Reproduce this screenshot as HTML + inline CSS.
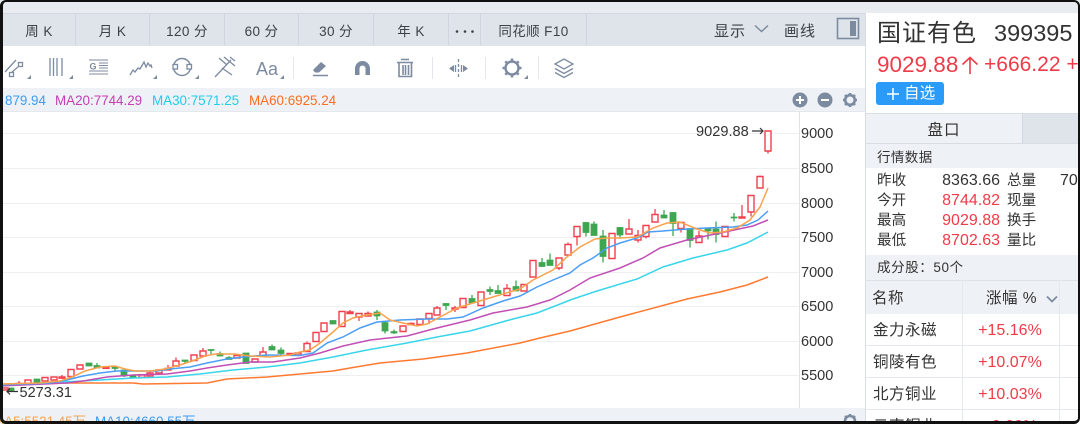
<!DOCTYPE html>
<html><head><meta charset="utf-8"><style>
html,body{margin:0;padding:0;background:#fff}
#p{position:relative;width:1080px;height:424px;overflow:hidden;background:#fff;font-family:"Liberation Sans","Noto Sans CJK SC",sans-serif;color:#333;filter:blur(.3px)}
.a{position:absolute;white-space:nowrap}
.b{position:absolute}
.tab{position:absolute;top:23px;height:18px;line-height:18px;font-size:13.5px;text-align:center;color:#3c4148;white-space:nowrap;letter-spacing:.4px}
.v{position:absolute;top:14px;width:1px;height:31px;background:#cfd6dd}
.ma{position:absolute;top:93px;line-height:16px;font-size:13.4px;white-space:nowrap}
.ax{position:absolute;left:801px;font-size:14.5px;line-height:16px;color:#333}
.l{position:absolute;left:877px;font-size:14.5px;line-height:18px;letter-spacing:.1px;color:#333;white-space:nowrap}
.l2{position:absolute;left:1007px;font-size:14.5px;line-height:18px;letter-spacing:.1px;color:#333;white-space:nowrap}
.n{position:absolute;left:880px;width:120px;text-align:right;font-size:16px;line-height:18px;color:#333}
.r{color:#ee3b48}
.nm{position:absolute;left:873px;font-size:15.5px;line-height:20px;letter-spacing:.5px;color:#333;white-space:nowrap}
.pc{position:absolute;left:962px;width:96px;text-align:center;font-size:16px;line-height:20px;color:#ee3b48}
</style></head><body><div id="p">

<div class="b" style="left:0;top:0;width:1080px;height:13px;background:#e8ecf0"></div>
<div class="b" style="left:0;top:13px;width:866px;height:33px;background:#dfe4ea"></div>
<div class="b" style="left:0;top:13px;width:866px;height:1px;background:#d2d8df"></div>
<div class="b" style="left:0;top:88px;width:866px;height:23px;background:#eef1f6"></div>
<div class="b" style="left:0;top:111px;width:866px;height:1px;background:#e4e7ec"></div>
<div class="b" style="left:0;top:408px;width:866px;height:16px;background:#eef1f6"></div>
<div class="b" style="left:799px;top:112px;width:1px;height:296px;background:#dfe3e8"></div>

<div class="v" style="left:75px"></div><div class="v" style="left:149px"></div><div class="v" style="left:224px"></div><div class="v" style="left:298px"></div><div class="v" style="left:373px"></div><div class="v" style="left:448px"></div><div class="v" style="left:480px"></div><div class="v" style="left:586px"></div>

<div class="tab" style="left:3px;width:72px">周 K</div>
<div class="tab" style="left:76px;width:73px">月 K</div>
<div class="tab" style="left:150px;width:74px">120 分</div>
<div class="tab" style="left:225px;width:73px">60 分</div>
<div class="tab" style="left:299px;width:74px">30 分</div>
<div class="tab" style="left:374px;width:74px">年 K</div>
<div class="tab" style="left:481px;width:105px">同花顺 F10</div>
<div class="tab" style="left:714px;width:34px;text-align:left;font-size:15px;letter-spacing:1px">显示</div>
<div class="tab" style="left:784px;width:34px;text-align:left;font-size:15px;letter-spacing:1px">画线</div>

<svg class="b" style="left:0;top:0" width="866" height="112" viewBox="0 0 866 112" fill="none" stroke="#7c8ba0" stroke-width="1.3">
<g fill="#3c4148" stroke="none"><circle cx="457" cy="31.500" r="1.300"/><circle cx="465" cy="31.500" r="1.300"/><circle cx="472.500" cy="31.500" r="1.300"/></g>
<path d="M755 25.500l6.500 6 6.500-6" stroke-width="1.500"/>
<rect x="837.500" y="18.500" width="21" height="20" stroke-width="1.600"/>
<rect x="850" y="21" width="6" height="15" fill="#7c8ba0" stroke="none"/>

<!-- draw tool 1 -->
<path d="M5 72L16 60M12 72l6-5"/>
<rect x="9.500" y="72.500" width="4" height="4"/><rect x="18.500" y="62.500" width="4" height="4"/>
<!-- vertical lines -->
<path d="M50 58v18M53.500 58v18M57 58v18M62 58v18"/>
<!-- fib -->
<path d="M89 60h19M89 71h19M89 74h19M99 63h9M99 65.500h9M99 68h9" stroke-width="1"/>
<text x="89.500" y="69.500" font-size="9" font-family="Liberation Sans" font-weight="bold" fill="#7c8ba0" stroke="none">G</text>
<!-- wave -->
<path d="M130 75l3-5 2 2 3-4 2 1 4-7 2 5 2-4 2 3 1-1 1 3"/>
<!-- circle -->
<circle cx="182" cy="67" r="8.500" stroke-width="1.500"/>
<rect x="173" y="64.500" width="4.500" height="4.500" fill="#fff"/><rect x="187" y="64.500" width="4.500" height="4.500" fill="#fff"/>
<!-- fork -->
<path d="M215 77l16-17M219 58l8 7M224 57l11 9M230 57l5 4M222 68l10 7"/>
<!-- divs -->
<g stroke="#e3e6ea" stroke-width="1"><path d="M293.500 57v22M432.500 57v22M485.500 57v22M538.500 56v23"/></g>
<!-- eraser -->
<path d="M313 70l8-8 5 4-7 6.500h-4z" fill="#7c8ba0" stroke="none"/><path d="M313 75.500h15" stroke-width="1.500"/>
<!-- magnet -->
<path d="M355 75v-6.500a7.500 7.500 0 0 1 15 0V75h-4.500v-6.500a3 3 0 0 0-6 0V75z" fill="#7c8ba0" stroke="none"/>
<!-- trash -->
<path d="M397 62.500h16M401 59.500h8M399 63v13.500h12.500V63M403 65v10M405.500 65v10M408.500 65v10" stroke-width="1.600"/>
<!-- width -->
<path d="M458.500 59v19" stroke-dasharray="3 2"/>
<path d="M449 68.500l5-3.500v7zM468 68.500l-5-3.500v7z" fill="#7c8ba0" stroke="none"/><path d="M455.500 65v7M461.500 65v7"/>
<!-- gear -->
<circle cx="512" cy="68" r="6.500" stroke-width="2.400"/>
<path d="M512 58.500v3M512 74.500v3M502.500 68h3M518.500 68h3M505.300 61.300l2 2M516.700 72.700l2 2M518.700 61.300l-2 2M507.300 72.700l-2 2" stroke-width="2.400"/>
<!-- layers -->
<path d="M555 64l9-5 9 5-9 5zM555 68.500l9 5 9-5M555 72.500l9 5 9-5"/>
<!-- small triangles -->
<g fill="#7c8ba0" stroke="none">
<path d="M31 75v4h-4zM73 75v4h-4zM157 75v4h-4zM199 75v4h-4zM284 75v4h-4zM528 75v4h-4z"/>
</g>
<!-- right MA icons -->
<circle cx="800" cy="100" r="7.500" fill="#7c8ba0" stroke="none"/><path d="M796 100h8M800 96v8" stroke="#fff" stroke-width="2"/>
<circle cx="825" cy="100" r="7.500" fill="#7c8ba0" stroke="none"/><path d="M821 100h8" stroke="#fff" stroke-width="2"/>
<circle cx="850" cy="100" r="4.800" stroke-width="2.600"/>
<path d="M850 93v2.500M850 104.500v2.500M843 100h2.500M854.500 100h2.500M845 95l1.800 1.800M853.200 103.200L855 105M855 95l-1.800 1.800M846.800 103.200L845 105" stroke-width="2.600"/>
</svg>
<div class="a" style="left:256px;top:59px;font-size:18px;line-height:20px;color:#7c8ba0">Aa</div>

<div class="ma" style="left:5px;color:#3d9cf2">879.94</div>
<div class="ma" style="left:55px;color:#c43fb0">MA20:7744.29</div>
<div class="ma" style="left:152px;color:#22cdea">MA30:7571.25</div>
<div class="ma" style="left:249px;color:#ff6d1f">MA60:6925.24</div>

<!-- chart -->
<svg class="b" style="left:0;top:0" width="800" height="424" viewBox="0 0 800 424" fill="none">
<path d="M0 133.500H799M0 168.500H799M0 203.500H799M0 237.500H799M0 272.500H799M0 306.500H799M0 341.500H799M0 375.500H799" stroke="#eeeff1" stroke-width="1"/>

<!-- wicks -->
<path stroke="#3fa650" stroke-width="1.300" d="M97 363V368M115 366V371M124 370V377M185 360V364M211 349V354M220 351.500V356.500M229 356V359.500M272 344.500V350M281 347.500V356.500M377 310V320M385 322V333.500M394 329.500V334M446 303V310M472 295V303M490 286.500V295M498 285V293.500M516 280.500V291M542 258V267M550 253.500V265.500M586 222V236.500M594 221.500V235.500M603 230V262.500M620 227V237.500M664 210V218.500M673 212V236M690 228V247.500M708 228V239.500M716 221.500V242.500M734 213V221.500"/>
<path stroke="#f0404f" stroke-width="1.300" d="M19 381V385M62 375V378M150 371V376M168 365V370M176 357.500V366M203 348V356M263 347V356M307 341.500V352M350 310V314M359 313V321M368 311.500V316M411 322.500V325.500M429 313V324M437 306V315M455 306V312M507 284V296M559 258V270M568 242.500V255M577 226V245.500M629 219V234M638 230V242.500M646 225V238.500M655 209V222M681 222V232.500M699 231V243M742 205V218M751 195V216.500M760 175.500V188M768 131V153.500"/>

<!-- green bodies -->
<path fill="#3fa650" stroke="#3fa650" stroke-width=".8" d="M8 388h6v3h-6zM34 379h6v4h-6zM86 363h6v3h-6zM94 365.500h6v2.500h-6zM112 367h6v1.500h-6zM121 370h6v6h-6zM130 375.500h6v2h-6zM182 360h6v1.300h-6zM208 349.500h6v1h-6zM217 353.500h6v2.500h-6zM226 357.500h6v2h-6zM243 353h6v10.500h-6zM269 346.500h6v3.500h-6zM278 350h6v3.500h-6zM330 320.500h6v3.500h-6zM374 312h6v4h-6zM382 322.500h6v8.500h-6zM391 331.500h6v1.500h-6zM443 303.500h6v2h-6zM469 298.500h6v4.500h-6zM487 289.500h6v2h-6zM495 290.500h6v3h-6zM513 286.500h6v4.500h-6zM539 262.500h6v4h-6zM547 260h6v5.500h-6zM583 222.500h6v10h-6zM591 224h6v11.500h-6zM600 236h6v20.500h-6zM617 227.500h6v7.500h-6zM661 215h6v3h-6zM670 212.500h6v11h-6zM687 228.500h6v12h-6zM705 228h6v3h-6zM713 229h6v5.500h-6zM731 217h6v1h-6z"/>

<!-- red bodies -->
<path fill="#fff" stroke="#f0404f" stroke-width="1.400" d="M2 388h6v2h-6zM16 383.500h6v1h-6zM25 380h6v4.500h-6zM42 377.500h6v3.500h-6zM51 377h6v3h-6zM59 377h6v1.200h-6zM68 369.500h6v7h-6zM77 365h6v4h-6zM103 367h6v1.300h-6zM139 375h6v2.300h-6zM147 373h6v3h-6zM156 370h6v3h-6zM165 368.500h6v1.500h-6zM173 361h6v5h-6zM191 355h6v5.500h-6zM200 351h6v5h-6zM234 355.500h6v2.500h-6zM252 359h6v3h-6zM260 352h6v4h-6zM287 353.500h6v1.500h-6zM295 353h6v2h-6zM304 343.500h6v8h-6zM313 332.500h6v9h-6zM321 323h6v8.500h-6zM339 311.500h6v15h-6zM347 312h6v1.500h-6zM356 313.500h6v3.500h-6zM365 313.500h6v2.500h-6zM400 326h6v5.500h-6zM408 323.500h6v1h-6zM417 319h6v5.500h-6zM426 313.500h6v5h-6zM434 308h6v7h-6zM452 308h6v1h-6zM460 298.500h6v9h-6zM478 292h6v13.500h-6zM504 288.500h6v7h-6zM521 284.500h6v6.500h-6zM530 260.500h6v16.500h-6zM556 258h6v10h-6zM565 244.500h6v10.500h-6zM574 226.500h6v10h-6zM609 233.500h6v25h-6zM626 229h6v5h-6zM635 235.500h6v4.500h-6zM643 225.500h6v11h-6zM652 214.500h6v7.500h-6zM678 222.500h6v6h-6zM696 236h6v6.500h-6zM722 226.500h6v10h-6zM739 217h6v1h-6zM748 195.500h6v16.500h-6zM757 176.500h6v11.500h-6zM765 131h6v20h-6z"/>

<!-- MA60 -->
<polyline stroke="#ff7a30" stroke-width="1.500" points="0,384 67,383 133,383 143,384 207,383 227,379 267,377 300,374 333,371 350,368 380,363 423,359 467,353 520,343 540,338 570,331 620,317 687,299 720,292 747,285 768,277"/>
<!-- MA30 -->
<polyline stroke="#39d5ea" stroke-width="1.500" points="0,385 83,381 133,378 167,377 200,374 233,370 267,367 300,363 333,357 367,350 407,343 437,337 470,331 513,319 537,313 573,299 597,291 637,279 663,267 693,258 727,250 747,243 768,232"/>
<!-- MA20 -->
<polyline stroke="#c14fb5" stroke-width="1.500" points="0,386 67,383 83,381 107,377 133,375 167,374 190,371 207,368 227,365 250,362 273,362 300,358 320,353 343,346 370,340 407,336 433,329 470,320 493,313 527,307 550,300 570,290 590,278 620,268 643,258 660,248 687,240 720,233 753,226 768,220"/>
<!-- MA10 -->
<polyline stroke="#4a9ff5" stroke-width="1.500" points="0,385 50,383 67,380 83,376 100,373 117,371 133,371 157,371 170,369 190,367 207,363 227,359 243,357 267,355 300,355.500 313,353 327,343 343,337 360,328 377,322 400,320 427,319 447,319 463,317 483,308 503,301 520,296 537,287 553,280 570,273 580,265 593,258 607,248 620,243 637,238 648,232 663,231 687,229 707,228 733,227 747,225 758,220 768,211"/>
<!-- MA5 -->
<polyline stroke="#f9a24c" stroke-width="1.500" points="3,384 40,383 60,381 72,377 85,371 100,367 115,366 125,369 135,371 150,371 165,369 180,365 195,360 205,356 215,354 235,354 250,356 270,357 290,355 300,352 310,350 320,343 333,332 343,323 353,318 367,315 380,313 390,320 403,323 417,326 427,324 440,317 457,308 473,303 493,297 513,291 520,289 533,280 553,270 567,257 580,247 595,239 607,238 620,238 637,237 653,228 667,223 680,222 697,229 710,233 723,232 737,228 750,220 760,207 768,188"/>

<!-- arrows -->
<path d="M752 131h11M760 128l3 3-3 3" stroke="#333" stroke-width="1.200"/>
<path d="M7 391.500h11M10 388.500l-3 3 3 3" stroke="#333" stroke-width="1.200"/>
</svg>
<div class="a" style="left:696px;top:124px;font-size:14.6px;line-height:16px;color:#333">9029.88</div>
<div class="a" style="left:19.500px;top:385px;font-size:14.5px;line-height:16px;color:#333">5273.31</div>

<div class="ax" style="top:126px">9000</div>
<div class="ax" style="top:161px">8500</div>
<div class="ax" style="top:196px">8000</div>
<div class="ax" style="top:230px">7500</div>
<div class="ax" style="top:265px">7000</div>
<div class="ax" style="top:299px">6500</div>
<div class="ax" style="top:334px">6000</div>
<div class="ax" style="top:368px">5500</div>

<div class="a" style="left:-7px;top:414px;font-size:13.4px;line-height:16px;color:#f9a24c">MA5:5521.45万</div>
<div class="a" style="left:95px;top:414px;font-size:13.4px;line-height:16px;color:#3d9cf2">MA10:4660.55万</div>
<svg class="b" style="left:842px;top:412px" width="16" height="12"><circle cx="8" cy="9" r="5" fill="none" stroke="#7c8ba0" stroke-width="2.600"/><path d="M8 2v3M3 4l2 2M13 4l-2 2" stroke="#7c8ba0" stroke-width="2.400"/></svg>

<!-- right panel -->
<div class="b" style="left:865px;top:13px;width:215px;height:411px;background:#fff"></div>
<div class="b" style="left:865px;top:13px;width:1px;height:411px;background:#d8dde3"></div>
<div class="a" style="left:877px;top:18px;font-size:24px;line-height:32px;letter-spacing:1px;color:#333">国证有色</div>
<div class="a" style="left:994px;top:18px;font-size:23.5px;line-height:30px;color:#333">399395</div>
<div class="a r" style="left:877px;top:51px;font-size:22.500px;line-height:28px">9029.88</div>
<svg class="b" style="left:960px;top:55px" width="20" height="19" fill="none"><path d="M10 3v16M2.500 9.500L10 2.500l7.500 7" stroke="#ee3b48" stroke-width="1.600"/></svg>
<div class="a r" style="left:984px;top:51px;font-size:21px;line-height:28px">+666.22 +</div>
<div class="b" style="left:876px;top:82px;width:68px;height:23px;background:#2a9bf8;border-radius:3px"></div>
<svg class="b" style="left:886px;top:87px" width="16" height="14" fill="none"><path d="M1 7h12M7 1v12" stroke="#fff" stroke-width="1.500"/></svg>
<div class="a" style="left:904px;top:82px;font-size:15.500px;line-height:23px;color:#fff;letter-spacing:.2px">自选</div>

<div class="b" style="left:866px;top:113px;width:214px;height:31px;background:#eef1f5;border-top:1px solid #d8dde3"></div>
<div class="b" style="left:1022px;top:114px;width:58px;height:29px;background:#dfe4ea;border-left:1px solid #d2d8df"></div>
<div class="a" style="left:866px;top:120px;width:156px;text-align:center;font-size:15.500px;line-height:22px;letter-spacing:1px;color:#333">盘口</div>
<div class="b" style="left:866px;top:143px;width:214px;height:25px;background:#eef1f5;border-top:1px solid #d8dde3;box-sizing:border-box"></div>
<div class="a" style="left:877px;top:149px;font-size:13.500px;line-height:18px;letter-spacing:.4px;color:#333">行情数据</div>

<div class="l" style="top:172px">昨收</div><div class="n" style="top:172px">8363.66</div><div class="l2" style="top:172px">总量</div><div class="a" style="left:1060px;top:172px;font-size:16px;line-height:18px">70</div>
<div class="l" style="top:192px">今开</div><div class="n r" style="top:192px">8744.82</div><div class="l2" style="top:192px">现量</div>
<div class="l" style="top:212px">最高</div><div class="n r" style="top:212px">9029.88</div><div class="l2" style="top:212px">换手</div>
<div class="l" style="top:232px">最低</div><div class="n r" style="top:232px">8702.63</div><div class="l2" style="top:232px">量比</div>

<div class="b" style="left:866px;top:255px;width:214px;height:25px;background:#eef1f5"></div>
<div class="a" style="left:877px;top:259px;font-size:13.500px;line-height:18px;letter-spacing:.6px;color:#333">成分股：50个</div>
<div class="b" style="left:866px;top:280px;width:214px;height:34px;background:#eef1f5;border-top:1px solid #dfe3e8;box-sizing:border-box"></div>
<div class="a" style="left:872px;top:289px;font-size:15.500px;line-height:20px;letter-spacing:.5px">名称</div>
<div class="a" style="left:986px;top:289px;font-size:15.500px;line-height:20px;letter-spacing:.5px">涨幅 %</div>
<svg class="b" style="left:1045px;top:294px" width="14" height="12" fill="none"><path d="M2 2.500l5 5 5-5" stroke="#7c8ba0" stroke-width="1.800"/></svg>
<div class="b" style="left:962px;top:280px;width:1px;height:144px;background:#e5e8ec"></div>
<div class="b" style="left:1059px;top:280px;width:1px;height:144px;background:#e5e8ec"></div>
<div class="b" style="left:866px;top:345px;width:214px;height:1px;background:#e5e8ec"></div>
<div class="b" style="left:866px;top:377px;width:214px;height:1px;background:#e5e8ec"></div>
<div class="b" style="left:866px;top:409px;width:214px;height:1px;background:#e5e8ec"></div>

<div class="nm" style="top:321px">金力永磁</div><div class="pc" style="top:321px">+15.16%</div>
<div class="nm" style="top:353px">铜陵有色</div><div class="pc" style="top:353px">+10.07%</div>
<div class="nm" style="top:385px">北方铜业</div><div class="pc" style="top:385px">+10.03%</div>
<div class="nm" style="top:417px">云南铜业</div><div class="pc" style="top:417px">+9.99%</div>

<!-- frame -->
<div class="b" style="left:0;top:0;width:1080px;height:424px;box-sizing:border-box;border-style:solid;border-color:#111;border-width:2px 2px 3px 3px;border-radius:6px;pointer-events:none"></div>
</div></body></html>
